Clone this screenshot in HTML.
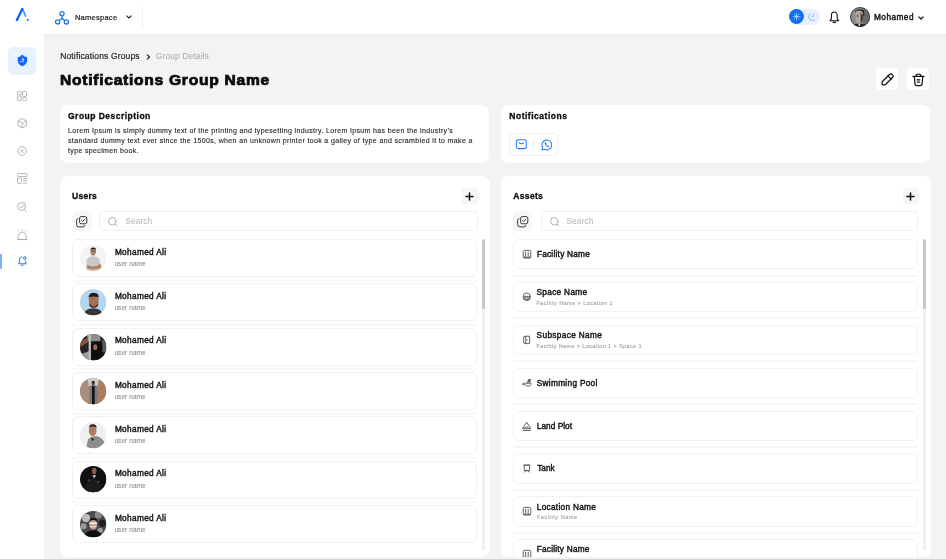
<!DOCTYPE html>
<html><head><meta charset="utf-8">
<style>
*{margin:0;padding:0;box-sizing:border-box}
html,body{width:946px;height:559px;overflow:hidden}
body{will-change:transform;background:#f2f3f5;font-family:"Liberation Sans",sans-serif;color:#111;position:relative}
.a{position:absolute}
.t{position:absolute;white-space:nowrap;line-height:1}
.card{position:absolute;background:#fff;border-radius:8px}
.btnw{position:absolute;background:#fff;border-radius:4px}
.row{position:absolute;border:1px solid #f1f1f1;border-radius:6px;background:#fff}
.sep{position:absolute;background:#f6f6f6}
svg{position:absolute;overflow:visible}
</style></head><body>
<div class="a" style="left:0;top:0;width:946px;height:34px;background:#fff"></div>
<div class="a" style="left:0;top:0;width:44px;height:559px;background:#fff"></div>
<div class="a" style="left:44px;top:34px;width:902px;height:4px;background:linear-gradient(#edeef1,#f2f3f5)"></div>

<svg style="left:14px;top:7px" width="17" height="16" viewBox="0 0 17 16">
  <path d="M8.4 2.0 L11.7 9.0" stroke="#5c9ef7" stroke-width="1.9" fill="none" stroke-linecap="round"/>
  <path d="M2.9 13.0 L8.3 2.1" stroke="#1061f5" stroke-width="2.3" fill="none" stroke-linecap="round"/>
  <rect x="12.9" y="12.1" width="1.7" height="1.7" rx="0.3" fill="#1061f5"/>
</svg>
<svg style="left:55px;top:10.5px" width="14" height="14" viewBox="0 0 14 14">
  <g stroke="#1a73f5" stroke-width="1.3" fill="none">
    <circle cx="7" cy="2.7" r="2.1"/>
    <circle cx="2.6" cy="10.9" r="2.1"/>
    <circle cx="11.4" cy="10.9" r="2.1"/>
    <path d="M7 4.8 V7.6 M7 7.6 L4.3 9.6 M7 7.6 L9.7 9.6"/>
  </g>
</svg>
<div class="t" style="left:74.90px;top:14.00px;font-size:7.5px;font-weight:normal;color:#1a1a1a;letter-spacing:0.269px;-webkit-text-stroke:0.2px #1a1a1a;">Namespace</div>
<svg style="left:125.5px;top:15px" width="6" height="4" viewBox="0 0 6 4"><path d="M0.8 0.8 L3 3 L5.2 0.8" stroke="#222" stroke-width="1.1" fill="none" stroke-linecap="round" stroke-linejoin="round"/></svg>
<div class="a" style="left:142px;top:6px;width:1px;height:21px;background:#f0f0f0"></div>
<div class="a" style="left:789px;top:8.8px;width:31px;height:16.1px;border-radius:8.1px;background:#e6f0fe"></div>
<div class="a" style="left:788.6px;top:8.6px;width:15.8px;height:15.8px;border-radius:50%;background:#fff"></div>
<div class="a" style="left:789px;top:9.1px;width:15px;height:15px;border-radius:50%;background:#136ef6"></div>
<svg style="left:792px;top:12.1px" width="9" height="9" viewBox="0 0 9 9">
  <g stroke="#a9cbfb" stroke-width="0.8" fill="none" stroke-linecap="round">
  <circle cx="4.5" cy="4.5" r="1.2" fill="#cfe2fd"/>
  <path d="M4.5 1.0V2.3 M4.5 6.7V8.0 M1.0 4.5H2.3 M6.7 4.5H8.0 M2.0 2.0L2.9 2.9 M6.1 6.1L7.0 7.0 M2.0 7.0L2.9 6.1 M6.1 2.9L7.0 2.0"/>
  </g>
</svg>
<svg style="left:806.5px;top:12.5px" width="9" height="9" viewBox="0 0 9 9">
  <path d="M3.2 1.0 A3.7 3.7 0 1 0 8.2 6.2 A3.2 3.2 0 0 1 3.2 1.0Z" stroke="#a6ccf5" stroke-width="0.9" fill="none"/>
  <path d="M6.6 0.6 L6.9 1.5 L7.8 1.8 L6.9 2.1 L6.6 3.0 L6.3 2.1 L5.4 1.8 L6.3 1.5Z" fill="#4b92f2"/>
  <circle cx="5.6" cy="3.6" r="0.6" fill="#4b92f2"/>
</svg>
<svg style="left:829px;top:10.5px" width="11" height="13" viewBox="0 0 11 13">
  <path d="M5.3 1.0 C3.5 1.0 2.4 2.5 2.4 4.6 V7.2 Q2.4 8.4 1.3 9.2 Q0.7 9.8 1.4 9.8 H9.2 Q9.9 9.8 9.3 9.2 Q8.2 8.4 8.2 7.2 V4.6 C8.2 2.5 7.1 1.0 5.3 1.0Z" stroke="#111" stroke-width="1.1" fill="none" stroke-linejoin="round"/>
  <path d="M4.1 11.0 Q5.3 12.2 6.5 11.0" stroke="#111" stroke-width="1.1" fill="none" stroke-linecap="round"/>
</svg>
<svg style="left:850px;top:7px" width="20" height="20" viewBox="0 0 20 20">
  <defs><clipPath id="ca0"><circle cx="10" cy="10" r="10"/></clipPath></defs>
  <g clip-path="url(#ca0)">
    <rect width="20" height="20" fill="#8c8c8c"/>
    <rect x="13" y="0" width="7" height="20" fill="#6a6a6a"/>
    <path d="M5 4 Q9 1 14 3.5 L14.5 9 L6 8Z" fill="#2a2a2a"/>
    <path d="M5.2 6 Q5.5 3.6 9.5 3.6 Q13 3.8 13 7 L12.6 13 Q11 16.5 9 16.5 Q6.2 16 5.6 12Z" fill="#b9a296"/>
    <path d="M10.5 6 Q13.4 7 13 12 L12 15.5 L10.8 16 Z" fill="#3a3a3a"/>
    <circle cx="7.6" cy="9" r="0.8" fill="#222"/>
    <path d="M2 20 Q4 16.5 9 16.8 Q15 16.5 17 20Z" fill="#1a1a1a"/>
    <path d="M8 16.8 L9.3 20 L10.6 16.8Z" fill="#e0e0e0"/>
    <circle cx="10" cy="10" r="9.5" fill="none" stroke="#3a3a3a" stroke-width="1"/>
  </g>
</svg>
<div class="t" style="left:874.00px;top:14.00px;font-size:8.25px;font-weight:normal;color:#111;letter-spacing:0.467px;-webkit-text-stroke:0.4px #111;">Mohamed</div>
<svg style="left:917.5px;top:15.5px" width="6" height="4" viewBox="0 0 6 4"><path d="M0.8 0.8 L3 3 L5.2 0.8" stroke="#111" stroke-width="1.2" fill="none" stroke-linecap="round" stroke-linejoin="round"/></svg>

<div class="a" style="left:8px;top:47px;width:28px;height:27.5px;border-radius:5px;background:#e8f1fe"></div>
<svg style="left:17px;top:54px" width="11" height="13" viewBox="0 0 11 13">
  <path d="M5.3 0.6 L7.4 2.6 L10.1 3.2 V6.8 C10.1 9.4 8.0 11.2 5.3 12.3 C2.6 11.2 0.7 9.4 0.7 6.8 V3.2 L3.2 2.6Z" fill="#0f66f5"/>
  <circle cx="6.0" cy="5.4" r="1.2" fill="#a9c9fb"/>
  <path d="M2.9 7.7 Q5.2 6.6 7.0 7.9" stroke="#a9c9fb" stroke-width="1" fill="none" stroke-linecap="round"/>
</svg>
<svg style="left:16.5px;top:91px" width="10" height="10" viewBox="0 0 10 10">
  <g stroke="#a6a6a6" stroke-width="0.8" fill="none">
  <rect x="0.5" y="0.5" width="3.8" height="3.4" rx="0.8"/>
  <rect x="5.6" y="0.5" width="3.9" height="4.9" rx="0.8"/>
  <rect x="0.5" y="5.1" width="3.8" height="4.4" rx="0.8"/>
  <rect x="5.6" y="6.6" width="3.9" height="2.9" rx="0.8"/>
  </g>
</svg>
<svg style="left:16.5px;top:118px" width="10.5" height="10.5" viewBox="0 0 10.5 10.5">
  <g stroke="#a6a6a6" stroke-width="0.85" fill="none" stroke-linejoin="round">
  <path d="M5.2 0.5 L9.4 2.9 V7.6 L5.2 10 L1.0 7.6 V2.9Z"/>
  <path d="M1.2 3.0 L5.2 5.3 L9.2 3.0 M5.2 5.3 V9.8"/>
  </g>
</svg>
<svg style="left:16.8px;top:146px" width="10" height="10" viewBox="0 0 10 10">
  <g stroke="#a6a6a6" stroke-width="0.85" fill="none" stroke-linejoin="round">
  <path d="M3.4 0.8 H6.6 L9.2 3.4 V6.6 L6.6 9.2 H3.4 L0.8 6.6 V3.4Z"/>
  <path d="M3.2 3.2 L6.8 6.8 M6.8 3.2 L5.6 4.4 M3.2 6.8 L4.4 5.6"/>
  </g>
</svg>
<svg style="left:16.5px;top:173px" width="10.5" height="11" viewBox="0 0 10.5 11">
  <g stroke="#a6a6a6" stroke-width="0.8" fill="none">
  <rect x="0.5" y="0.5" width="9.5" height="3" rx="1"/>
  <rect x="0.5" y="5" width="4" height="5.5" rx="0.8"/>
  <path d="M6 5.6 H10 M6 7.8 H10 M6 10 H10"/>
  </g>
</svg>
<svg style="left:16.8px;top:201.5px" width="10.5" height="10.5" viewBox="0 0 10.5 10.5">
  <g stroke="#a6a6a6" stroke-width="0.8" fill="none" stroke-linecap="round">
  <circle cx="4.5" cy="4.5" r="3.9"/>
  <path d="M7.3 7.3 L9.8 9.8 M2.8 4.6 L4.2 5.9 L6.3 3.6 M8.6 0.6 L7 2.2"/>
  </g>
</svg>
<svg style="left:17px;top:228.5px" width="10.5" height="11" viewBox="0 0 10.5 11">
  <g stroke="#a6a6a6" stroke-width="0.8" fill="none" stroke-linecap="round">
  <path d="M1.2 10.2 V7.2 A4 4 0 0 1 9.2 7.2 V10.2Z M0.4 10.4 H10"/>
  <path d="M5.2 0.5 V1.8 M1.2 1.2 L2 2.3 M9.2 1.2 L8.4 2.3"/>
  </g>
</svg>
<div class="a" style="left:0;top:254px;width:2px;height:15px;border-radius:0 1px 1px 0;background:#80b0fa"></div>
<svg style="left:17.5px;top:256px" width="9" height="10.5" viewBox="0 0 9 10.5">
  <g stroke="#1a73f5" stroke-width="1" fill="none" stroke-linejoin="round">
  <path d="M4.2 0.8 C2.4 0.8 1.6 2.3 1.6 3.8 V5.8 L0.6 7.8 H8.2 L7.4 5.8 V4.6"/>
  <circle cx="6.8" cy="2.1" r="1.3"/>
  <path d="M3 9.1 Q4.2 10 5.4 9.1"/>
  </g>
</svg>
<div class="t" style="left:60.20px;top:52.00px;font-size:8.5px;font-weight:normal;color:#1a1a1a;letter-spacing:0.148px;-webkit-text-stroke:0.15px #1a1a1a;">Notifications Groups</div>
<svg style="left:145.5px;top:53.5px" width="5" height="6" viewBox="0 0 5 6"><path d="M1.2 0.8 L3.6 3 L1.2 5.2" stroke="#222" stroke-width="1.1" fill="none" stroke-linecap="round" stroke-linejoin="round"/></svg>
<div class="t" style="left:155.80px;top:52.00px;font-size:8.5px;font-weight:normal;color:#b0b0b0;letter-spacing:0.090px;-webkit-text-stroke:0.1px #b0b0b0;">Group Details</div>
<div class="t" style="left:60.00px;top:72.00px;font-size:15.6px;font-weight:bold;color:#0a0a0a;letter-spacing:0.732px;-webkit-text-stroke:0.8px #0a0a0a;transform:scaleY(0.92);transform-origin:0 13px;">Notifications Group Name</div>

<div class="btnw" style="left:876px;top:68px;width:22px;height:22px"></div>
<svg style="left:880.5px;top:72.5px" width="13" height="13" viewBox="0 0 13 13">
  <g stroke="#111" stroke-width="1.25" fill="none" stroke-linejoin="round" stroke-linecap="round">
  <path d="M8.45 1.45 A2.2 2.2 0 0 1 11.55 4.55 L4.8 11.3 Q4.2 11.9 3.4 11.9 L1.7 11.9 Q1.1 11.9 1.1 11.3 L1.1 9.6 Q1.1 8.8 1.7 8.2 Z"/>
  <path d="M7.0 2.9 L10.1 6.0"/>
  </g>
</svg>
<div class="btnw" style="left:907px;top:68px;width:22px;height:22px"></div>
<svg style="left:912px;top:72.5px" width="13" height="13" viewBox="0 0 13 13">
  <g stroke="#111" stroke-width="1.2" fill="none" stroke-linecap="round" stroke-linejoin="round">
  <path d="M0.9 3.4 H12"/>
  <path d="M4.1 3.2 Q4.1 1.0 6.5 1.0 Q8.9 1.0 8.9 3.2"/>
  <path d="M2.4 3.7 L3.0 11.2 Q3.2 12.7 4.7 12.7 H8.4 Q9.9 12.7 10.1 11.2 L10.7 3.7"/>
  <path d="M5.0 6.8 H7.9 M5.3 9.1 H7.6"/>
  </g>
</svg>
<div class="card" style="left:60px;top:105.4px;width:428.6px;height:58.1px"></div>
<div class="t" style="left:68.00px;top:112.00px;font-size:8.5px;font-weight:bold;color:#0a0a0a;letter-spacing:0.480px;-webkit-text-stroke:0.3px #0a0a0a;">Group Description</div>
<div class="a" style="left:68px;top:125.6px;width:440px;font-size:7px;line-height:10px;color:#1a1a1a;letter-spacing:0.355px;white-space:nowrap;-webkit-text-stroke:0.1px #1a1a1a">Lorem Ipsum is simply dummy text of the printing and typesetting industry. Lorem Ipsum has been the industry&#8217;s<br>standard dummy text ever since the 1500s, when an unknown printer took a galley of type and scrambled it to make a<br>type specimen book.</div>
<div class="card" style="left:501.1px;top:105.4px;width:428.6px;height:58.1px"></div>
<div class="t" style="left:509.30px;top:112.00px;font-size:8.5px;font-weight:bold;color:#0a0a0a;letter-spacing:0.513px;-webkit-text-stroke:0.3px #0a0a0a;">Notifications</div>
<div class="a" style="left:509px;top:132.8px;width:49px;height:23px;border:1px solid #efefef;border-radius:4px"></div>
<svg style="left:514.5px;top:139px" width="12" height="10" viewBox="0 0 12 10">
  <rect x="1.3" y="0.8" width="10" height="8.8" rx="2.1" stroke="#2f7df6" stroke-width="1.05" fill="none"/>
  <path d="M4.0 3.8 Q6.3 5.6 8.6 3.8" stroke="#2f7df6" stroke-width="1.05" fill="none" stroke-linecap="round"/>
</svg>
<div class="a" style="left:533.2px;top:140px;width:0.6px;height:8px;background:#ececec"></div>
<svg style="left:540.5px;top:138.5px" width="12" height="12" viewBox="0 0 12 12">
  <path d="M1.0 10.9 L1.6 8.4 A4.9 4.9 0 1 1 3.6 10.3Z" stroke="#2f7df6" stroke-width="1.05" fill="none" stroke-linejoin="round"/>
  <path d="M4.0 3.6 Q3.6 4.3 4.3 5.6 Q5.1 7.0 6.5 7.7 Q7.6 8.1 8.1 7.4 L7.3 6.6 L6.6 7.0 Q5.4 6.4 4.9 5.2 L5.3 4.6 L4.6 3.5Z" fill="#2f7df6" stroke="#2f7df6" stroke-width="0.5" stroke-linejoin="round"/>
</svg>
<div class="card" style="left:59.5px;top:175.7px;width:430.4px;height:381.4px"></div>
<div class="t" style="left:72.00px;top:192.00px;font-size:8.5px;font-weight:bold;color:#0a0a0a;letter-spacing:0.300px;-webkit-text-stroke:0.3px #0a0a0a;">Users</div>
<div class="a" style="left:462px;top:188px;width:15.5px;height:15.5px;border-radius:3px;background:#f6f6f6"></div>
<svg style="left:465px;top:191.5px" width="9" height="9" viewBox="0 0 9 9"><path d="M4.5 1.0 V8.0 M1.0 4.5 H8.0" stroke="#111" stroke-width="1.5" stroke-linecap="round"/></svg>
<div class="a" style="left:72.5px;top:211.3px;width:19px;height:19.4px;border-radius:3px;background:#f6f7f8"></div>
<svg style="left:76.3px;top:215.7px" width="11.5" height="11.5" viewBox="0 0 11.5 11.5">
  <g stroke="#222" stroke-width="0.9" fill="none" stroke-linejoin="round">
  <rect x="3.6" y="0.6" width="7.2" height="7.2" rx="1.6"/>
  <path d="M2.3 2.6 Q0.6 2.8 0.6 4.6 V8.6 Q0.6 10.9 2.9 10.9 H6.9 Q8.7 10.9 8.9 9.2"/>
  <path d="M5.6 4.4 L6.7 5.4 L8.8 3.2" stroke-linecap="round"/>
  </g>
</svg>
<div class="a" style="left:99.4px;top:211px;width:378.2px;height:20px;border:1px solid #f0f0f0;border-radius:4px"></div>
<svg style="left:108.4px;top:217px" width="10" height="10" viewBox="0 0 10 10"><g stroke="#a8a8a8" stroke-width="0.9" fill="none" stroke-linecap="round"><circle cx="4.3" cy="4.3" r="3.7"/><path d="M7.1 7.1 L8.8 8.8"/></g></svg>
<div class="t" style="left:125.20px;top:217.00px;font-size:8.5px;font-weight:normal;color:#bababa;letter-spacing:0.039px;-webkit-text-stroke:0.05px #bababa;">Search</div>
<div class="a" style="left:482.2px;top:239px;width:2.8px;height:311px;border-radius:2px;background:#f0f0f0"></div>
<div class="a" style="left:482.2px;top:239px;width:2.8px;height:70px;border-radius:2px;background:#c6c6c6"></div>
<div class="row" style="left:72.1px;top:239.10px;width:405.4px;height:38px"></div>
<div class="sep" style="left:72px;top:279.60px;width:405.5px;height:2px;background:#f9f9f9"></div>
<svg style="left:79.8px;top:244.90px" width="26.4" height="26.4" viewBox="0 0 26 26"><defs><clipPath id="cu0"><circle cx="13" cy="13" r="13"/></clipPath></defs><g clip-path="url(#cu0)"><rect width="26" height="26" fill="#f4f4f4"/><path d="M6 26 L6.5 15 Q8 11 13 11 Q18 11 19.5 15 L20 26Z" fill="#c9c9c9"/><path d="M7 19.5 Q13 23.5 20.5 18.5 L21 22.5 Q13 25.5 7 23Z" fill="#b58064"/><ellipse cx="13" cy="7.2" rx="2.6" ry="3.4" fill="#b8876c"/><path d="M10.2 5.8 Q10.2 2.2 13 2.4 Q16 2.2 15.8 5.8 L15.2 4.5 Q13 3.9 10.8 4.5Z" fill="#1e1a18"/><rect x="10.8" y="5.8" width="4.6" height="0.9" fill="#555"/></g></svg>
<div class="t" style="left:114.90px;top:249.00px;font-size:8.25px;font-weight:normal;color:#111;letter-spacing:0.354px;-webkit-text-stroke:0.4px #111;">Mohamed Ali</div>
<div class="t" style="left:114.40px;top:261.00px;font-size:6.5px;font-weight:normal;color:#888888;letter-spacing:0.076px;-webkit-text-stroke:0.05px #888888;">user name</div>
<div class="row" style="left:72.1px;top:283.40px;width:405.4px;height:38px"></div>
<div class="sep" style="left:72px;top:323.90px;width:405.5px;height:2px;background:#f9f9f9"></div>
<svg style="left:79.8px;top:289.20px" width="26.4" height="26.4" viewBox="0 0 26 26"><defs><clipPath id="cu1"><circle cx="13" cy="13" r="13"/></clipPath></defs><g clip-path="url(#cu1)"><rect width="26" height="26" fill="#b3d7ee"/><path d="M3 26 Q5 19 13 19 Q21 19 23 26Z" fill="#353535"/><ellipse cx="13.5" cy="12" rx="4.8" ry="6.2" fill="#a56e56"/><path d="M8.5 10 Q8 3.6 13.5 3.8 Q19 3.6 18.5 10 L17.8 8 Q13.5 6.6 9.2 8Z" fill="#231c1a"/><path d="M9 14 Q13.5 20 18 14 L17.6 17 Q13.5 20 9.4 17Z" fill="#4a3026"/></g></svg>
<div class="t" style="left:114.90px;top:293.00px;font-size:8.25px;font-weight:normal;color:#111;letter-spacing:0.354px;-webkit-text-stroke:0.4px #111;">Mohamed Ali</div>
<div class="t" style="left:114.40px;top:305.00px;font-size:6.5px;font-weight:normal;color:#888888;letter-spacing:0.076px;-webkit-text-stroke:0.05px #888888;">user name</div>
<div class="row" style="left:72.1px;top:327.70px;width:405.4px;height:38px"></div>
<div class="sep" style="left:72px;top:368.20px;width:405.5px;height:2px;background:#f9f9f9"></div>
<svg style="left:79.8px;top:333.50px" width="26.4" height="26.4" viewBox="0 0 26 26"><defs><clipPath id="cu2"><circle cx="13" cy="13" r="13"/></clipPath></defs><g clip-path="url(#cu2)"><rect width="26" height="26" fill="#262626"/><rect x="7" y="0" width="13" height="7" fill="#8e8e8e"/><path d="M0 8 L8 3 L8 8 L0 13Z" fill="#85573f"/><path d="M0 20 L9 17 L9 26 L0 26Z" fill="#9a9a9a"/><rect x="8.5" y="0" width="2.2" height="26" fill="#c4c4c4"/><path d="M11 26 L11 10 Q16 6 22 9 L26 26Z" fill="#0e0e0e"/><ellipse cx="15" cy="13" rx="2" ry="2.8" fill="#9a6a52"/><rect x="22" y="6" width="4" height="12" fill="#5a5a5a"/></g></svg>
<div class="t" style="left:114.90px;top:337.00px;font-size:8.25px;font-weight:normal;color:#111;letter-spacing:0.354px;-webkit-text-stroke:0.4px #111;">Mohamed Ali</div>
<div class="t" style="left:114.40px;top:350.00px;font-size:6.5px;font-weight:normal;color:#888888;letter-spacing:0.076px;-webkit-text-stroke:0.05px #888888;">user name</div>
<div class="row" style="left:72.1px;top:372.00px;width:405.4px;height:38px"></div>
<div class="sep" style="left:72px;top:412.50px;width:405.5px;height:2px;background:#f9f9f9"></div>
<svg style="left:79.8px;top:377.80px" width="26.4" height="26.4" viewBox="0 0 26 26"><defs><clipPath id="cu3"><circle cx="13" cy="13" r="13"/></clipPath></defs><g clip-path="url(#cu3)"><rect width="26" height="26" fill="#ad7a62"/><rect x="0" y="0" width="10" height="26" fill="#a98e7e"/><path d="M7 0 H19 L17 9 H9Z" fill="#cdcdcd"/><path d="M9 26 L9.5 8 Q13 6 17 8 L17.5 26Z" fill="#7c7c7c"/><rect x="11.8" y="8" width="2.7" height="18" fill="#151515"/><ellipse cx="13" cy="5" rx="1.6" ry="2.2" fill="#4a3a32"/><path d="M11.4 4.2 Q13 2 14.6 4.2Z" fill="#111"/></g></svg>
<div class="t" style="left:114.90px;top:382.00px;font-size:8.25px;font-weight:normal;color:#111;letter-spacing:0.354px;-webkit-text-stroke:0.4px #111;">Mohamed Ali</div>
<div class="t" style="left:114.40px;top:394.00px;font-size:6.5px;font-weight:normal;color:#888888;letter-spacing:0.076px;-webkit-text-stroke:0.05px #888888;">user name</div>
<div class="row" style="left:72.1px;top:416.30px;width:405.4px;height:38px"></div>
<div class="sep" style="left:72px;top:456.80px;width:405.5px;height:2px;background:#f9f9f9"></div>
<svg style="left:79.8px;top:422.10px" width="26.4" height="26.4" viewBox="0 0 26 26"><defs><clipPath id="cu4"><circle cx="13" cy="13" r="13"/></clipPath></defs><g clip-path="url(#cu4)"><rect width="26" height="26" fill="#efefef"/><path d="M6 26 L8 17 Q12 13 17 14 Q23 16 25 22 L24 26Z" fill="#8c8c8c"/><path d="M11 15 L14 17 L12 19Z" fill="#222"/><ellipse cx="12.5" cy="8.5" rx="3.8" ry="5.4" fill="#b27a5e"/><path d="M8.6 6.5 Q9 2 12.5 2.2 Q16.4 2 16.4 6.5 L15.6 5 Q12.5 4 9.4 5Z" fill="#2e221e"/></g></svg>
<div class="t" style="left:114.90px;top:426.00px;font-size:8.25px;font-weight:normal;color:#111;letter-spacing:0.354px;-webkit-text-stroke:0.4px #111;">Mohamed Ali</div>
<div class="t" style="left:114.40px;top:438.00px;font-size:6.5px;font-weight:normal;color:#888888;letter-spacing:0.076px;-webkit-text-stroke:0.05px #888888;">user name</div>
<div class="row" style="left:72.1px;top:460.60px;width:405.4px;height:38px"></div>
<div class="sep" style="left:72px;top:501.10px;width:405.5px;height:2px;background:#f9f9f9"></div>
<svg style="left:79.8px;top:466.40px" width="26.4" height="26.4" viewBox="0 0 26 26"><defs><clipPath id="cu5"><circle cx="13" cy="13" r="13"/></clipPath></defs><g clip-path="url(#cu5)"><rect width="26" height="26" fill="#101010"/><path d="M4 26 Q6 14 13 12 Q20 14 22 26Z" fill="#1c1c1c"/><ellipse cx="14" cy="5" rx="2.2" ry="3.2" fill="#8a5e48"/><path d="M12 9 L14 12 L16 9Z" fill="#cfcfcf"/><rect x="8" y="13" width="2" height="2" fill="#444"/><rect x="17" y="15" width="2" height="1.5" fill="#555"/></g></svg>
<div class="t" style="left:114.90px;top:470.00px;font-size:8.25px;font-weight:normal;color:#111;letter-spacing:0.354px;-webkit-text-stroke:0.4px #111;">Mohamed Ali</div>
<div class="t" style="left:114.40px;top:483.00px;font-size:6.5px;font-weight:normal;color:#888888;letter-spacing:0.076px;-webkit-text-stroke:0.05px #888888;">user name</div>
<div class="row" style="left:72.1px;top:504.90px;width:405.4px;height:38px"></div>
<svg style="left:79.8px;top:510.70px" width="26.4" height="26.4" viewBox="0 0 26 26"><defs><clipPath id="cu6"><circle cx="13" cy="13" r="13"/></clipPath></defs><g clip-path="url(#cu6)"><rect width="26" height="26" fill="#4a4a4a"/><circle cx="6" cy="7" r="4" fill="#bdbdbd"/><circle cx="18" cy="4" r="3.5" fill="#8a8a8a"/><circle cx="22" cy="12" r="3.5" fill="#1e1e1e"/><circle cx="3.5" cy="15" r="3" fill="#9a9a9a"/><circle cx="20" cy="19" r="2.5" fill="#a0a0a0"/><path d="M3 26 Q6 19 13 19 Q20 19 23 26Z" fill="#0e0e0e"/><ellipse cx="13" cy="13.5" rx="3.8" ry="5" fill="#c49a82"/><path d="M9 11 Q9 6.5 13 6.8 Q17 6.5 17 11 L16.4 9.4 Q13 8.4 9.6 9.4Z" fill="#111"/><rect x="9.3" y="11.2" width="7.4" height="1.8" fill="#f0f0f0"/><rect x="10" y="14.8" width="6" height="1.2" fill="#e6e6e6"/></g></svg>
<div class="t" style="left:114.90px;top:515.00px;font-size:8.25px;font-weight:normal;color:#111;letter-spacing:0.354px;-webkit-text-stroke:0.4px #111;">Mohamed Ali</div>
<div class="t" style="left:114.40px;top:527.00px;font-size:6.5px;font-weight:normal;color:#888888;letter-spacing:0.076px;-webkit-text-stroke:0.05px #888888;">user name</div>
<div class="card" style="left:500.8px;top:175.7px;width:430.4px;height:381.4px"></div>
<div class="t" style="left:513.30px;top:192.00px;font-size:8.5px;font-weight:bold;color:#0a0a0a;letter-spacing:0.330px;-webkit-text-stroke:0.3px #0a0a0a;">Assets</div>
<div class="a" style="left:903px;top:188px;width:15.5px;height:15.5px;border-radius:3px;background:#f6f6f6"></div>
<svg style="left:906px;top:191.5px" width="9" height="9" viewBox="0 0 9 9"><path d="M4.5 1.0 V8.0 M1.0 4.5 H8.0" stroke="#111" stroke-width="1.5" stroke-linecap="round"/></svg>
<div class="a" style="left:513.2px;top:211.3px;width:19px;height:19.4px;border-radius:3px;background:#f6f7f8"></div>
<svg style="left:517.0px;top:215.7px" width="11.5" height="11.5" viewBox="0 0 11.5 11.5">
  <g stroke="#222" stroke-width="0.9" fill="none" stroke-linejoin="round">
  <rect x="3.6" y="0.6" width="7.2" height="7.2" rx="1.6"/>
  <path d="M2.3 2.6 Q0.6 2.8 0.6 4.6 V8.6 Q0.6 10.9 2.9 10.9 H6.9 Q8.7 10.9 8.9 9.2"/>
  <path d="M5.6 4.4 L6.7 5.4 L8.8 3.2" stroke-linecap="round"/>
  </g>
</svg>
<div class="a" style="left:540.6px;top:211px;width:377.8px;height:20px;border:1px solid #f0f0f0;border-radius:4px"></div>
<svg style="left:549.6px;top:217px" width="10" height="10" viewBox="0 0 10 10"><g stroke="#a8a8a8" stroke-width="0.9" fill="none" stroke-linecap="round"><circle cx="4.3" cy="4.3" r="3.7"/><path d="M7.1 7.1 L8.8 8.8"/></g></svg>
<div class="t" style="left:566.40px;top:217.00px;font-size:8.5px;font-weight:normal;color:#bababa;letter-spacing:0.039px;-webkit-text-stroke:0.05px #bababa;">Search</div>
<div class="a" style="left:923.3px;top:239px;width:2.8px;height:311px;border-radius:2px;background:#f0f0f0"></div>
<div class="a" style="left:923.3px;top:239px;width:2.8px;height:70px;border-radius:2px;background:#c6c6c6"></div>
<div class="row" style="left:513.2px;top:239.10px;width:405.3px;height:30.2px"></div>
<div class="sep" style="left:513.2px;top:274.60px;width:405.3px;height:2px"></div>
<svg style="left:522px;top:249.10px" width="10" height="10" viewBox="0 0 10 10"><g stroke="#505050" stroke-width="0.9" fill="none"><rect x="1.2" y="1.3" width="7.6" height="7.8" rx="1.6"/><path d="M3.6 2.8 V7.4 M6.2 2.8 V7.4"/><path d="M1.2 8.2 H8.8" stroke-width="1.1"/></g></svg>
<div class="t" style="left:536.90px;top:251.00px;font-size:8.25px;font-weight:normal;color:#111;letter-spacing:0.243px;-webkit-text-stroke:0.4px #111;">Facility Name</div>
<div class="row" style="left:513.2px;top:281.97px;width:405.3px;height:30.2px"></div>
<div class="sep" style="left:513.2px;top:317.47px;width:405.3px;height:2px"></div>
<svg style="left:522px;top:291.97px" width="10" height="10" viewBox="0 0 10 10"><g stroke="#505050" stroke-width="0.9" fill="none" stroke-linejoin="round"><path d="M1.2 4.6 Q1.2 1.0 4.8 1.0 Q8.4 1.0 8.4 4.6 Q8.4 8.6 4.8 8.6 Q1.2 8.6 1.2 4.6Z"/><path d="M1.4 4.4 H8.2 M1.4 5.9 H8.2 M1.6 7.3 H8.0"/></g></svg>
<div class="t" style="left:536.50px;top:289.00px;font-size:8.25px;font-weight:normal;color:#111;letter-spacing:0.322px;-webkit-text-stroke:0.4px #111;">Space Name</div>
<div class="t" style="left:536.50px;top:301.00px;font-size:5.5px;font-weight:normal;color:#a0a0a0;letter-spacing:0.448px;-webkit-text-stroke:0.1px #a0a0a0;">Facility Name &gt; Location 1</div>
<div class="row" style="left:513.2px;top:324.84px;width:405.3px;height:30.2px"></div>
<div class="sep" style="left:513.2px;top:360.34px;width:405.3px;height:2px"></div>
<svg style="left:522px;top:334.84px" width="10" height="10" viewBox="0 0 10 10"><g stroke="#505050" stroke-width="0.9" fill="none" stroke-linejoin="round"><path d="M3.2 1.2 H7.6 V8.6 H3.2"/><path d="M1.7 1.8 L3.8 1.2 V8.6 L1.7 8.0Z"/><path d="M5.0 4.2 V5.2" stroke-width="1.1"/></g></svg>
<div class="t" style="left:536.60px;top:332.00px;font-size:8.25px;font-weight:normal;color:#111;letter-spacing:0.358px;-webkit-text-stroke:0.4px #111;">Subspace Name</div>
<div class="t" style="left:536.60px;top:344.00px;font-size:5.5px;font-weight:normal;color:#a0a0a0;letter-spacing:0.384px;-webkit-text-stroke:0.1px #a0a0a0;">Facility Name &gt; Location 1 &gt; Space 1</div>
<div class="row" style="left:513.2px;top:367.71px;width:405.3px;height:30.2px"></div>
<div class="sep" style="left:513.2px;top:403.21px;width:405.3px;height:2px"></div>
<svg style="left:522px;top:377.71px" width="10" height="10" viewBox="0 0 10 10"><g stroke="#505050" stroke-width="0.9" fill="none" stroke-linecap="round" stroke-linejoin="round"><path d="M0.8 6.0 Q2.2 4.2 4.4 5.2 Q6.4 6.2 8.6 5.0 Q9.6 6.4 8.2 7.6 Q6.2 9.0 4.4 7.6 Q2.4 6.4 0.8 6.0Z"/><path d="M5.6 4.4 L6.4 1.8 Q7.6 1.2 9.0 1.6 L7.6 2.4 L8.2 4.2" fill="#505050"/></g></svg>
<div class="t" style="left:536.80px;top:380.00px;font-size:8.25px;font-weight:normal;color:#111;letter-spacing:0.307px;-webkit-text-stroke:0.4px #111;">Swimming Pool</div>
<div class="row" style="left:513.2px;top:410.58px;width:405.3px;height:30.2px"></div>
<div class="sep" style="left:513.2px;top:446.08px;width:405.3px;height:2px"></div>
<svg style="left:522px;top:420.58px" width="10" height="10" viewBox="0 0 10 10"><g stroke="#505050" stroke-width="0.9" fill="none" stroke-linejoin="round"><path d="M0.6 7.3 L4.6 1.3 L8.8 7.3Z"/><path d="M2.8 7.2 Q4.6 4.0 6.6 7.2"/><path d="M0.6 9.3 H8.8" stroke-width="1.1"/></g></svg>
<div class="t" style="left:536.80px;top:423.00px;font-size:8.25px;font-weight:normal;color:#111;letter-spacing:0.041px;-webkit-text-stroke:0.4px #111;">Land Plot</div>
<div class="row" style="left:513.2px;top:453.45px;width:405.3px;height:30.2px"></div>
<div class="sep" style="left:513.2px;top:488.95px;width:405.3px;height:2px"></div>
<svg style="left:522px;top:463.45px" width="10" height="10" viewBox="0 0 10 10"><g stroke="#505050" stroke-width="0.9" fill="none" stroke-linejoin="round"><path d="M1.6 2.1 H8.2" stroke-width="1.3"/><path d="M2.2 2.2 V7.4 M7.6 2.2 V7.4 M2.2 7.4 H7.6 M2.2 9.2 L4.9 7.4 L7.6 9.2"/></g></svg>
<div class="t" style="left:537.20px;top:465.00px;font-size:8.25px;font-weight:normal;color:#111;letter-spacing:0.033px;-webkit-text-stroke:0.4px #111;">Tank</div>
<div class="row" style="left:513.2px;top:496.32px;width:405.3px;height:30.2px"></div>
<div class="sep" style="left:513.2px;top:531.82px;width:405.3px;height:2px"></div>
<svg style="left:522px;top:506.32px" width="10" height="10" viewBox="0 0 10 10"><g stroke="#505050" stroke-width="0.9" fill="none"><rect x="1.2" y="1.3" width="7.6" height="7.8" rx="1.6"/><path d="M3.6 2.8 V7.4 M6.2 2.8 V7.4"/><path d="M1.2 8.2 H8.8" stroke-width="1.1"/></g></svg>
<div class="t" style="left:536.80px;top:504.00px;font-size:8.25px;font-weight:normal;color:#111;letter-spacing:0.292px;-webkit-text-stroke:0.4px #111;">Location Name</div>
<div class="t" style="left:536.80px;top:515.00px;font-size:5.5px;font-weight:normal;color:#a0a0a0;letter-spacing:0.596px;-webkit-text-stroke:0.1px #a0a0a0;">Facility Name</div>
<div class="row" style="left:513.2px;top:539.19px;width:405.3px;height:30.2px"></div>
<div class="sep" style="left:513.2px;top:574.69px;width:405.3px;height:2px"></div>
<svg style="left:522px;top:549.19px" width="10" height="10" viewBox="0 0 10 10"><g stroke="#505050" stroke-width="0.9" fill="none"><rect x="1.2" y="1.3" width="7.6" height="7.8" rx="1.6"/><path d="M3.6 2.8 V7.4 M6.2 2.8 V7.4"/><path d="M1.2 8.2 H8.8" stroke-width="1.1"/></g></svg>
<div class="t" style="left:536.80px;top:546.00px;font-size:8.25px;font-weight:normal;color:#111;letter-spacing:0.218px;-webkit-text-stroke:0.4px #111;">Facility Name</div>
<div class="t" style="left:536.80px;top:558.00px;font-size:5.5px;font-weight:normal;color:#a0a0a0;letter-spacing:0.596px;-webkit-text-stroke:0.1px #a0a0a0;">Facility Name</div>
<div class="a" style="left:44px;top:557.1px;width:902px;height:2px;background:#f2f3f5"></div>
</body></html>
